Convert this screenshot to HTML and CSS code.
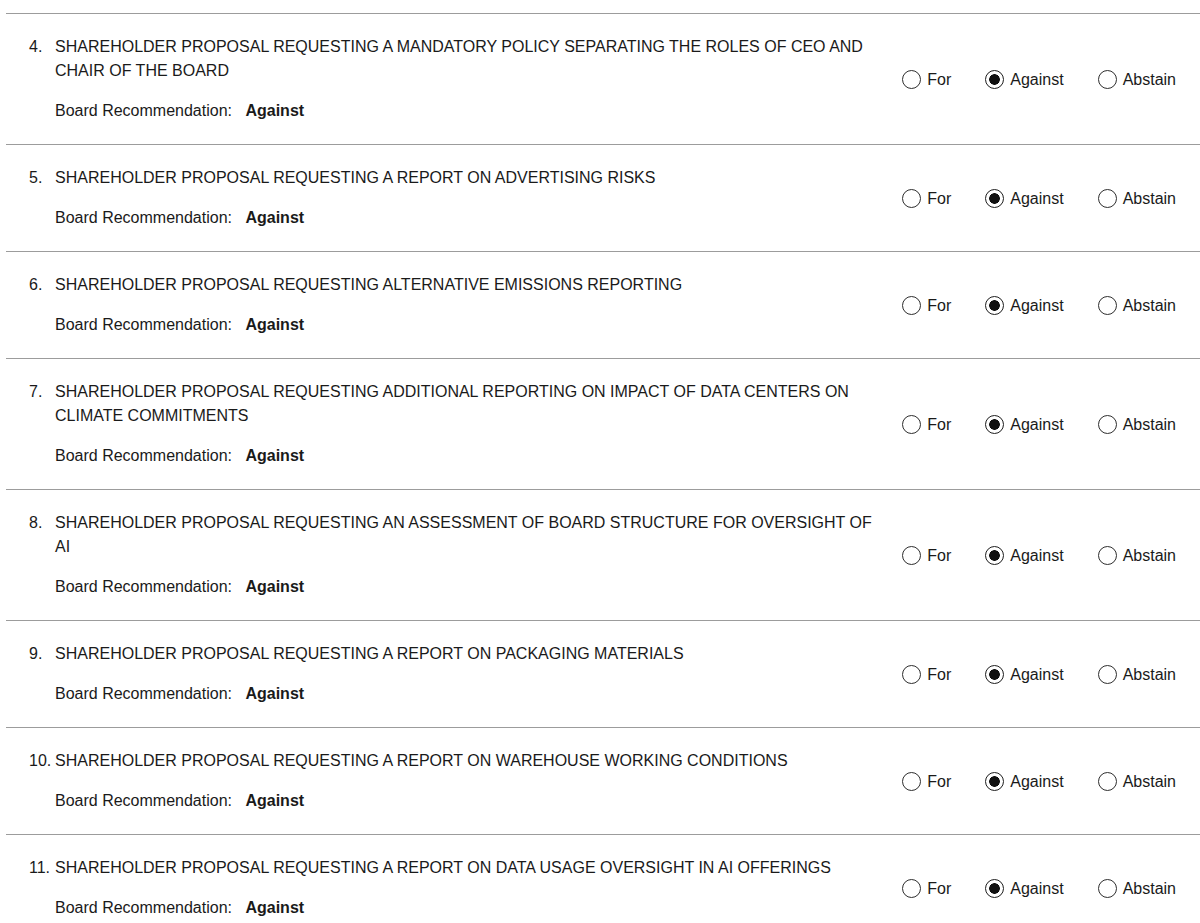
FILE: index.html
```html
<!DOCTYPE html>
<html lang="en">
<head>
<meta charset="utf-8">
<title>Proposals</title>
<link rel="stylesheet" href="styles.css">
</head>
<body>
<div class="proposals">
  <div class="row">
    <div class="info">
      <div class="title"><span class="num">4.</span><span class="text">SHAREHOLDER PROPOSAL REQUESTING A MANDATORY POLICY SEPARATING THE ROLES OF CEO AND CHAIR OF THE BOARD</span></div>
      <div class="rec">Board Recommendation: <b>Against</b></div>
    </div>
    <div class="options">
      <label class="option"><input type="radio" name="p4"><span>For</span></label>
      <label class="option"><input type="radio" name="p4" checked><span>Against</span></label>
      <label class="option"><input type="radio" name="p4"><span>Abstain</span></label>
    </div>
  </div>
  <div class="row">
    <div class="info">
      <div class="title"><span class="num">5.</span><span class="text">SHAREHOLDER PROPOSAL REQUESTING A REPORT ON ADVERTISING RISKS</span></div>
      <div class="rec">Board Recommendation: <b>Against</b></div>
    </div>
    <div class="options">
      <label class="option"><input type="radio" name="p5"><span>For</span></label>
      <label class="option"><input type="radio" name="p5" checked><span>Against</span></label>
      <label class="option"><input type="radio" name="p5"><span>Abstain</span></label>
    </div>
  </div>
  <div class="row">
    <div class="info">
      <div class="title"><span class="num">6.</span><span class="text">SHAREHOLDER PROPOSAL REQUESTING ALTERNATIVE EMISSIONS REPORTING</span></div>
      <div class="rec">Board Recommendation: <b>Against</b></div>
    </div>
    <div class="options">
      <label class="option"><input type="radio" name="p6"><span>For</span></label>
      <label class="option"><input type="radio" name="p6" checked><span>Against</span></label>
      <label class="option"><input type="radio" name="p6"><span>Abstain</span></label>
    </div>
  </div>
  <div class="row">
    <div class="info">
      <div class="title"><span class="num">7.</span><span class="text">SHAREHOLDER PROPOSAL REQUESTING ADDITIONAL REPORTING ON IMPACT OF DATA CENTERS ON CLIMATE COMMITMENTS</span></div>
      <div class="rec">Board Recommendation: <b>Against</b></div>
    </div>
    <div class="options">
      <label class="option"><input type="radio" name="p7"><span>For</span></label>
      <label class="option"><input type="radio" name="p7" checked><span>Against</span></label>
      <label class="option"><input type="radio" name="p7"><span>Abstain</span></label>
    </div>
  </div>
  <div class="row">
    <div class="info">
      <div class="title"><span class="num">8.</span><span class="text">SHAREHOLDER PROPOSAL REQUESTING AN ASSESSMENT OF BOARD STRUCTURE FOR OVERSIGHT OF AI</span></div>
      <div class="rec">Board Recommendation: <b>Against</b></div>
    </div>
    <div class="options">
      <label class="option"><input type="radio" name="p8"><span>For</span></label>
      <label class="option"><input type="radio" name="p8" checked><span>Against</span></label>
      <label class="option"><input type="radio" name="p8"><span>Abstain</span></label>
    </div>
  </div>
  <div class="row">
    <div class="info">
      <div class="title"><span class="num">9.</span><span class="text">SHAREHOLDER PROPOSAL REQUESTING A REPORT ON PACKAGING MATERIALS</span></div>
      <div class="rec">Board Recommendation: <b>Against</b></div>
    </div>
    <div class="options">
      <label class="option"><input type="radio" name="p9"><span>For</span></label>
      <label class="option"><input type="radio" name="p9" checked><span>Against</span></label>
      <label class="option"><input type="radio" name="p9"><span>Abstain</span></label>
    </div>
  </div>
  <div class="row">
    <div class="info">
      <div class="title"><span class="num">10.</span><span class="text">SHAREHOLDER PROPOSAL REQUESTING A REPORT ON WAREHOUSE WORKING CONDITIONS</span></div>
      <div class="rec">Board Recommendation: <b>Against</b></div>
    </div>
    <div class="options">
      <label class="option"><input type="radio" name="p10"><span>For</span></label>
      <label class="option"><input type="radio" name="p10" checked><span>Against</span></label>
      <label class="option"><input type="radio" name="p10"><span>Abstain</span></label>
    </div>
  </div>
  <div class="row">
    <div class="info">
      <div class="title"><span class="num">11.</span><span class="text">SHAREHOLDER PROPOSAL REQUESTING A REPORT ON DATA USAGE OVERSIGHT IN AI OFFERINGS</span></div>
      <div class="rec">Board Recommendation: <b>Against</b></div>
    </div>
    <div class="options">
      <label class="option"><input type="radio" name="p11"><span>For</span></label>
      <label class="option"><input type="radio" name="p11" checked><span>Against</span></label>
      <label class="option"><input type="radio" name="p11"><span>Abstain</span></label>
    </div>
  </div>
</div>
</body>
</html>
```

FILE: styles.css
```css
* { box-sizing: border-box; }

html, body {
  margin: 0;
  padding: 0;
  background: #fff;
}

body {
  font-family: "Liberation Sans", Arial, Helvetica, sans-serif;
  font-size: 16px;
  color: #1a1a1a;
  overflow: hidden;
}

.proposals {
  margin: 13px 0 0 6px;
  width: 1194px;
}

.row {
  display: flex;
  align-items: center;
  justify-content: space-between;
  border-top: 1px solid #9c9c9c;
  padding: 21px 24px 21px 23px;
}

.info {
  width: 860px;
  display: flex;
  flex-direction: column;
  gap: 16px;
}

.title {
  display: flex;
  line-height: 24px;
}

.num {
  flex: 0 0 26px;
  white-space: nowrap;
}

.text {
  flex: 1;
}

.rec {
  padding-left: 26px;
  line-height: 24px;
}

.rec b {
  font-weight: 700;
  margin-left: 9px;
}

.options {
  display: flex;
  align-items: center;
  gap: 34px;
  padding-top: 1px;
}

.option {
  display: flex;
  align-items: center;
  gap: 6px;
  line-height: 20px;
}

.option input {
  -webkit-appearance: none;
  appearance: none;
  margin: 0;
  width: 19px;
  height: 19px;
  border: 1px solid #2e2e2e;
  border-radius: 50%;
  background: #fff;
}

.option input:checked {
  border: 1.5px solid #1e1e1e;
  background: radial-gradient(circle, #111 0 5px, #fff 5.6px);
}
```
